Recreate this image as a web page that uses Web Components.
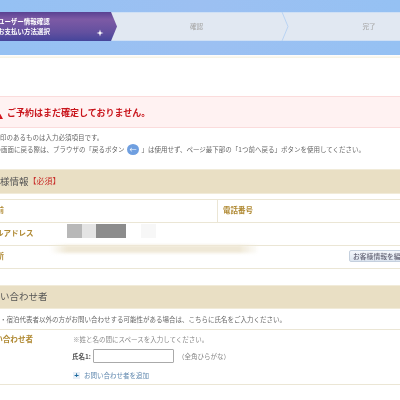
<!DOCTYPE html>
<html lang="ja"><head><meta charset="utf-8"><title>予約</title>
<style>
html,body{margin:0;padding:0;background:#fff;overflow:hidden;width:400px;height:400px}
body{font-family:"Noto Sans CJK JP","Noto Sans",sans-serif;font-size:6.5px;color:#555}
</style></head><body>
<x-page>
<x-stepper></x-stepper>
<x-alert>ご予約はまだ確定しておりません。</x-alert>
<x-notes></x-notes>
<x-section title-text="様情報" req="【必須】" style="margin-top:14px">
  <x-info></x-info>
</x-section>
<x-section title-text="お問い合わせ者" style="margin-top:16px;margin-left:-19px;--h:24px">
  <x-contact></x-contact>
</x-section>
</x-page>
<script>
function def(name,html,init){customElements.define(name,class extends HTMLElement{
  constructor(){super();this.attachShadow({mode:'open'}).innerHTML=html;}
  connectedCallback(){if(init)init(this,this.shadowRoot);}
});}
def('x-page',`<style>:host{display:block;width:400px;height:400px;overflow:hidden;filter:blur(.25px)}</style><slot></slot>`);
def('x-stepper',`<style>
:host{display:block;height:55px;padding:12px 0 0;box-sizing:border-box;background:linear-gradient(90deg,#95c1f3,#9cc0f2 50%,#95c1f3);position:relative}
:host::after{content:"";position:absolute;left:0;right:0;top:55px;height:3px;background:linear-gradient(#fff,#f5f1e2)}
.bar{display:grid;grid-template-columns:117px 165px 1fr;height:29px;background:#e1e8f2;border-top:1px solid #cfe0f5;border-bottom:1px solid #cfe0f5;box-sizing:border-box}
.cell{position:relative;display:flex;align-items:center;justify-content:center;color:#aaa;font-size:6.6px;font-weight:500;padding-bottom:1px;box-sizing:border-box}
.first{display:block;color:#fff;padding:0}
.first svg,.chev{position:absolute;top:-1px;height:29px}
.first svg{left:0;width:117px}
.lab{position:absolute;left:-2px;top:3px;line-height:10px;font-size:6.5px;font-weight:700;white-space:nowrap}
.two{transform:translateX(-3px)}
.three{padding-left:56px}
</style>
<div class="bar">
 <div class="cell first">
  <svg viewBox="0 0 117 29" preserveAspectRatio="none"><defs><linearGradient id="g" x1="0" y1="0" x2="0" y2="1"><stop offset="0" stop-color="#5a4292"/><stop offset=".25" stop-color="#7d5aa5"/><stop offset=".7" stop-color="#63509f"/><stop offset="1" stop-color="#45459b"/></linearGradient></defs><path d="M0 0H111L117 14.500 111 29H0Z" fill="url(#g)"/><path d="M100 17.500l.8 2.700 2.700.8-2.700.8-.8 2.700-.8-2.700-2.700-.8 2.700-.8z" fill="#fff"/></svg>
  <div class="lab">ユーザー情報確認<br>お支払い方法選択</div>
 </div>
 <div class="cell two">確認<svg class="chev" style="right:-10px;width:8px" viewBox="0 0 8 29" preserveAspectRatio="none"><path d="M1 0L7 14.500 1 29" fill="none" stroke="#b9d3f3" stroke-width="1"/></svg></div>
 <div class="cell three">完了</div>
</div>`);
def('x-alert',`<style>
:host{display:flex;align-items:center;gap:4px;box-sizing:border-box;height:32px;margin-top:41px;background:#fff2f2;border-top:1px solid #fbdcdc;border-bottom:1px solid #fbdcdc;color:#c9161d;font-weight:700;font-size:9px;white-space:nowrap}
svg{width:11px;height:10px;margin-left:-8px;flex:none;margin-top:4px}
</style><svg viewBox="0 0 11 10"><path d="M5.500 0L11 10H0Z" fill="#d3131b"/></svg><slot></slot>`);
def('x-notes',`<style>
:host{display:block;margin-top:4px;margin-left:-12px;font-size:6.5px;line-height:11.500px;color:#666;white-space:nowrap}
.a{margin-left:5.500px}
.b{display:inline-block;width:12px;height:11px;border-radius:50%;background:#6f9fe0;color:#fff;font-size:7px;line-height:10px;text-align:center;vertical-align:middle;margin:0 1px}
</style><div class="a">※印のあるものは入力必須項目です。</div><div>前の画面に戻る際は、ブラウザの「戻るボタン <span class="b">←</span> 」は使用せず、ページ最下部の「1つ前へ戻る」ボタンを使用してください。</div>`);
def('x-section',`<style>
:host{display:block;white-space:nowrap}
.h{height:var(--h,25px);box-sizing:border-box;background:#e9dfc4;border-top:1px solid #f1ebd9;border-bottom:1px solid #f1ebd9;display:flex;align-items:center;font-size:9.500px;color:#555;padding-bottom:2px}
.r{color:#c9302c;font-size:8px}
</style><div class="h"><span class="t"></span><span class="r"></span></div><slot></slot>`,
(el,s)=>{s.querySelector('.t').textContent=el.getAttribute('title-text');s.querySelector('.r').textContent=el.getAttribute('req')||'';});
def('x-info',`<style>
:host{display:block;position:relative;margin:5px 0 0;width:400px;border-top:1px solid #ebe6d5;font-size:7.500px}
.row{height:23px;box-sizing:border-box;border-bottom:1px solid #ebe6d5;display:flex;align-items:center;color:#b08a34;font-weight:700;position:relative;padding-bottom:3px}
.split{display:grid;grid-template-columns:217px 1fr;align-items:stretch;padding-bottom:0}
.split>div{display:flex;align-items:center;padding-bottom:3px}
.split>div+div{border-left:1px solid #ebe6d5;padding-left:5px}
.btn{position:absolute;right:-4px;top:4px;height:12px;box-sizing:border-box;padding:0 3px;border:1px solid #c5d0de;border-radius:2px;background:linear-gradient(#f4f7fb,#dde5ef);color:#667;font-size:6.800px;line-height:10px;font-weight:500;width:55px;overflow:hidden;white-space:nowrap}
.m{position:absolute;top:24px;height:14px}
.smear{position:absolute;left:50px;top:45px;width:210px;height:8px;background:linear-gradient(90deg,transparent,#efe8d6 8%,#efe8d6 90%,transparent);filter:blur(1.500px)}
</style>
<div class="row split"><div><span style="margin-left:-11px">名前</span></div><div>電話番号</div></div>
<div class="row"><span style="margin-left:-19px">メールアドレス</span></div>
<div class="row"><span style="margin-left:-11px">住所</span><span class="btn">お客様情報を編集</span></div>
<div class="m" style="left:67px;width:15px;background:#b8b8b8"></div>
<div class="m" style="left:82px;width:14px;background:#e4e4e4"></div>
<div class="m" style="left:96px;width:30px;background:#8c8c8c"></div>
<div class="m" style="left:141px;width:15px;background:#f7f7f7"></div>
<div class="smear"></div>`);
def('x-contact',`<style>
:host{display:block;margin-left:19px;width:400px;font-size:6.500px;color:#666}
.note{height:21px;box-sizing:border-box;border-bottom:1px solid #ebe6d5;display:flex;align-items:center}
.row{display:grid;grid-template-columns:72px 1fr;height:55px;box-sizing:border-box;border-bottom:1px solid #ebe6d5;padding-top:3px}
.lab{color:#b08a34;font-weight:700;font-size:7.600px;margin-left:-20px;line-height:12px;white-space:nowrap}
.s{line-height:12px;color:#888;margin-left:1px}
.f{display:flex;align-items:center;gap:2px;margin-top:4px;height:14px;color:#888}
.f b{color:#555;font-weight:700}
.i{width:81px;height:14px;box-sizing:border-box;border:1px solid #aaa;background:#fff;margin-right:2px;border-radius:1px}
.add{display:flex;align-items:center;gap:4px;margin-top:7px;margin-left:1px;color:#5d86ad}
.p{width:7px;height:7px;background:#e8eff7;color:#1d6a9e;font-size:8px;line-height:7px;text-align:center;font-weight:700;font-family:"Liberation Sans",sans-serif}
</style>
<div class="note"><span>・宿泊代表者以外の方がお問い合わせする可能性がある場合は、こちらに氏名をご入力ください。</span></div>
<div class="row"><div class="lab">お問い合わせ者</div><div>
<div class="s">※姓と名の間にスペースを入力してください。</div>
<div class="f"><b>氏名1:</b><span class="i"></span><span>（全角ひらがな）</span></div>
<div class="add"><span class="p">+</span><span>お問い合わせ者を追加</span></div>
</div></div>`);
</script>
</body></html>
